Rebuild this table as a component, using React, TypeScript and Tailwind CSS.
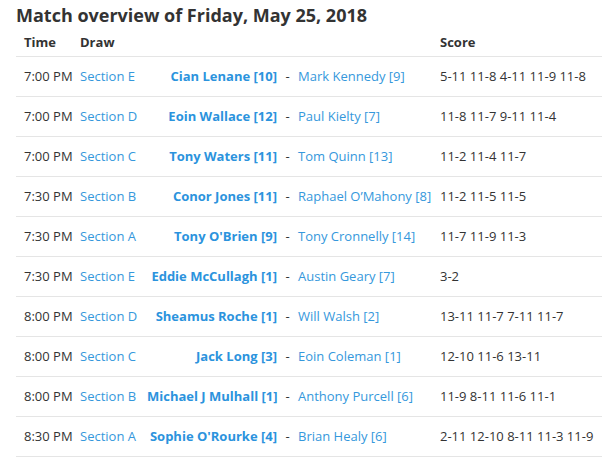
const matches = [
  { time: '7:00 PM', draw: 'Section E', p1: 'Cian Lenane [10]', p2: 'Mark Kennedy [9]', score: '5-11 11-8 4-11 11-9 11-8' },
  { time: '7:00 PM', draw: 'Section D', p1: 'Eoin Wallace [12]', p2: 'Paul Kielty [7]', score: '11-8 11-7 9-11 11-4' },
  { time: '7:00 PM', draw: 'Section C', p1: 'Tony Waters [11]', p2: 'Tom Quinn [13]', score: '11-2 11-4 11-7' },
  { time: '7:30 PM', draw: 'Section B', p1: 'Conor Jones [11]', p2: 'Raphael O’Mahony [8]', score: '11-2 11-5 11-5' },
  { time: '7:30 PM', draw: 'Section A', p1: "Tony O'Brien [9]", p2: 'Tony Cronnelly [14]', score: '11-7 11-9 11-3' },
  { time: '7:30 PM', draw: 'Section E', p1: 'Eddie McCullagh [1]', p2: 'Austin Geary [7]', score: '3-2' },
  { time: '8:00 PM', draw: 'Section D', p1: 'Sheamus Roche [1]', p2: 'Will Walsh [2]', score: '13-11 11-7 7-11 11-7' },
  { time: '8:00 PM', draw: 'Section C', p1: 'Jack Long [3]', p2: 'Eoin Coleman [1]', score: '12-10 11-6 13-11' },
  { time: '8:00 PM', draw: 'Section B', p1: 'Michael J Mulhall [1]', p2: 'Anthony Purcell [6]', score: '11-9 8-11 11-6 11-1' },
  { time: '8:30 PM', draw: 'Section A', p1: "Sophie O'Rourke [4]", p2: 'Brian Healy [6]', score: '2-11 12-10 8-11 11-3 11-9' },
]

export default function App() {
  return (
    <div className="pl-4 pr-px bg-white text-[#333] font-['Open_Sans',sans-serif] text-[13px]">
      <h2 className="text-[18px] leading-[30px] font-bold">Match overview of Friday, May 25, 2018</h2>

      {/* match table */}
      <table className="w-[586px] table-fixed border-collapse">
        <colgroup>
          <col className="w-[60px]" />
          <col className="w-[67px]" />
          <col className="w-[138px]" />
          <col className="w-[13px]" />
          <col className="w-[142px]" />
          <col />
        </colgroup>
        <thead>
          <tr className="h-[26px] border-b border-[#e5e5e5] font-bold">
            <th className="text-left pl-2 pr-1">Time</th>
            <th className="text-left px-1">Draw</th>
            <th></th>
            <th></th>
            <th></th>
            <th className="text-left px-1">Score</th>
          </tr>
        </thead>
        <tbody>
          {matches.map((m, i) => (
            <tr key={i} className="h-[40px] border-b border-[#e5e5e5] whitespace-nowrap">
              <td className="pl-2 pr-1 pt-px">{m.time}</td>
              <td className="px-1 pt-px text-[#3598dc]">{m.draw}</td>
              <td className="px-1 pt-px text-right font-bold text-[#2b93dd]">{m.p1}</td>
              <td className="px-1 pt-px text-center">-</td>
              <td className="px-1 pt-px text-[#3598dc]">{m.p2}</td>
              <td className="px-1 pt-px">{m.score}</td>
            </tr>
          ))}
        </tbody>
      </table>
    </div>
  )
}
